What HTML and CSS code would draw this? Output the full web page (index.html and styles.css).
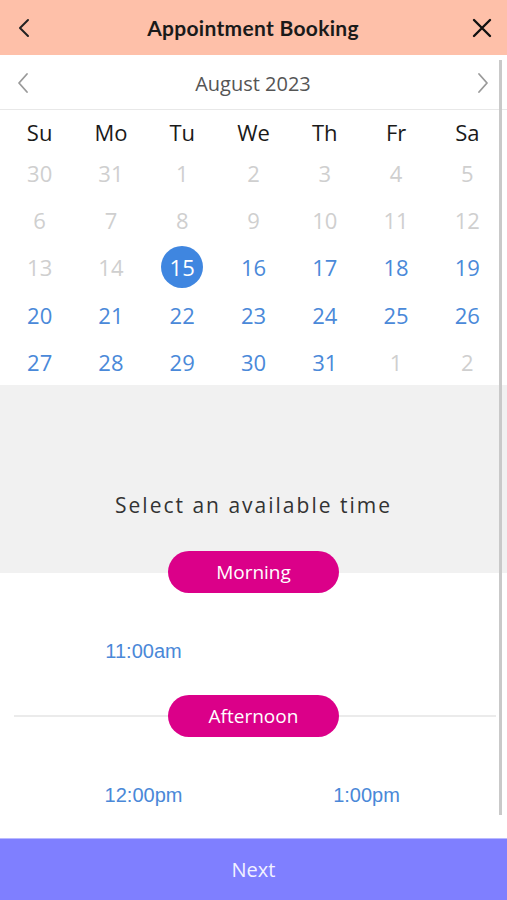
FILE: index.html
```html
<!DOCTYPE html>
<html lang="en">
<head>
<meta charset="utf-8">
<title>Appointment Booking</title>
<link rel="stylesheet" href="styles.css">
</head>
<body>
<div class="app">
  <header class="topbar">
    <button class="icon-btn" aria-label="Back">
      <svg width="14" height="20" viewBox="0 0 14 20"><path d="M11 2 L3 10 L11 18" fill="none" stroke="#222" stroke-width="2" stroke-linecap="round" stroke-linejoin="round"/></svg>
    </button>
    <h1 class="title">Appointment Booking</h1>
    <button class="icon-btn" aria-label="Close">
      <svg width="20" height="20" viewBox="0 0 20 20"><path d="M2 2 L18 18 M18 2 L2 18" fill="none" stroke="#111" stroke-width="2.4" stroke-linecap="round"/></svg>
    </button>
  </header>

  <main class="scroller">
    <div class="month-nav">
      <svg class="nav-arrow" width="14" height="22" viewBox="0 0 14 22"><path d="M11 2 L3 11 L11 20" fill="none" stroke="#9a9a9a" stroke-width="1.8" stroke-linecap="round" stroke-linejoin="round"/></svg>
      <span class="month">August 2023</span>
      <svg class="nav-arrow" width="14" height="22" viewBox="0 0 14 22"><path d="M3 2 L11 11 L3 20" fill="none" stroke="#9a9a9a" stroke-width="1.8" stroke-linecap="round" stroke-linejoin="round"/></svg>
    </div>

    <div class="calendar">
      <div class="wd">Su</div><div class="wd">Mo</div><div class="wd">Tu</div><div class="wd">We</div><div class="wd">Th</div><div class="wd">Fr</div><div class="wd">Sa</div>

      <div class="day off">30</div><div class="day off">31</div><div class="day off">1</div><div class="day off">2</div><div class="day off">3</div><div class="day off">4</div><div class="day off">5</div>
      <div class="day off">6</div><div class="day off">7</div><div class="day off">8</div><div class="day off">9</div><div class="day off">10</div><div class="day off">11</div><div class="day off">12</div>
      <div class="day off">13</div><div class="day off">14</div><div class="day"><span class="selected">15</span></div><div class="day on">16</div><div class="day on">17</div><div class="day on">18</div><div class="day on">19</div>
      <div class="day on">20</div><div class="day on">21</div><div class="day on">22</div><div class="day on">23</div><div class="day on">24</div><div class="day on">25</div><div class="day on">26</div>
      <div class="day on">27</div><div class="day on">28</div><div class="day on">29</div><div class="day on">30</div><div class="day on">31</div><div class="day off">1</div><div class="day off">2</div>
    </div>

    <section class="prompt">
      <p class="prompt-text">Select an available time</p>
    </section>

    <div class="divider divider-first">
      <span class="pill">Morning</span>
    </div>
    <div class="slots slots-morning">
      <span class="slot">11:00am</span>
    </div>

    <div class="divider divider-line">
      <span class="pill">Afternoon</span>
    </div>
    <div class="slots slots-afternoon">
      <span class="slot">12:00pm</span>
      <span class="slot">1:00pm</span>
    </div>

    <div class="scrollbar"></div>
  </main>

  <button class="next">Next</button>
</div>
</body>
</html>
```

FILE: styles.css
```css
* { box-sizing: border-box; }

html, body {
  margin: 0;
  padding: 0;
  background: #fff;
}

.app {
  width: 507px;
  height: 900px;
  display: flex;
  flex-direction: column;
  font-family: "Open Sans", "Noto Sans", sans-serif;
  overflow: hidden;
}

.topbar {
  height: 55px;
  flex: none;
  background: #fec0a9;
  display: flex;
  align-items: center;
  justify-content: space-between;
  padding: 0 14px 0 13px;
}

.icon-btn {
  border: 0;
  background: transparent;
  padding: 0;
  width: 22px;
  height: 22px;
  display: flex;
  align-items: center;
  justify-content: center;
}

.title {
  margin: 0;
  font-family: Lato, "Noto Sans", sans-serif;
  font-weight: 700;
  font-size: 21px;
  color: #1a1a1a;
  letter-spacing: 0.3px;
}

.scroller {
  flex: 1;
  position: relative;
  display: flex;
  flex-direction: column;
}

.month-nav {
  height: 55px;
  display: flex;
  align-items: center;
  justify-content: space-between;
  padding: 2px 17px 0 16px;
  border-bottom: 1px solid #e8e8e8;
}

.month {
  font-size: 20px;
  color: #555;
  padding-top: 1px;
}

.calendar {
  display: grid;
  grid-template-columns: repeat(7, 1fr);
  grid-template-rows: 39px repeat(5, 47.3px);
  padding: 0 4px;
}

.wd, .day {
  display: flex;
  align-items: center;
  justify-content: center;
  font-size: 22px;
}

.wd {
  color: #1a1a1a;
  padding-top: 4px;
}

.day.off { color: #cfcfcf; }
.day.on { color: #4a89d9; }

.selected {
  width: 42px;
  height: 42px;
  border-radius: 50%;
  background: #3f86e0;
  color: #fff;
  display: flex;
  align-items: center;
  justify-content: center;
}

.prompt {
  background: #f1f1f1;
  height: 166px;
  display: flex;
  align-items: flex-end;
  justify-content: center;
  padding-bottom: 32px;
}

.prompt-text {
  margin: 0;
  font-size: 21px;
  letter-spacing: 2px;
  color: #333;
}

.divider {
  height: 42px;
  display: flex;
  align-items: center;
  justify-content: center;
}

.divider-first {
  background: linear-gradient(#f1f1f1 0 22px, #fff 22px);
}

.divider-line {
  background: linear-gradient(#ebebeb, #ebebeb) no-repeat 14px 20px / 482px 2px;
}

.pill {
  width: 171px;
  height: 42px;
  border-radius: 21px;
  background: #db0089;
  color: #fff;
  font-size: 19px;
  display: flex;
  align-items: center;
  justify-content: center;
}

.slots {
  display: grid;
  grid-template-columns: 223px 223px;
  padding-left: 32px;
  font-family: "Liberation Sans", Arial, sans-serif;
}

.slots-morning {
  height: 102px;
  padding-top: 46px;
}

.slots-afternoon {
  padding-top: 46px;
}

.slot {
  justify-self: center;
  font-size: 20px;
  line-height: 24px;
  color: #4a88d8;
}

.scrollbar {
  position: absolute;
  top: 5px;
  bottom: 23px;
  right: 5px;
  width: 3px;
  background: #c9c9c9;
}

.next {
  flex: none;
  height: 62px;
  border: 0;
  border-top: 1px solid #b9b9ff;
  background: #7f7fff;
  color: #f2f2ff;
  font-family: "Open Sans", "Noto Sans", sans-serif;
  font-size: 20px;
  padding: 0;
}
```
